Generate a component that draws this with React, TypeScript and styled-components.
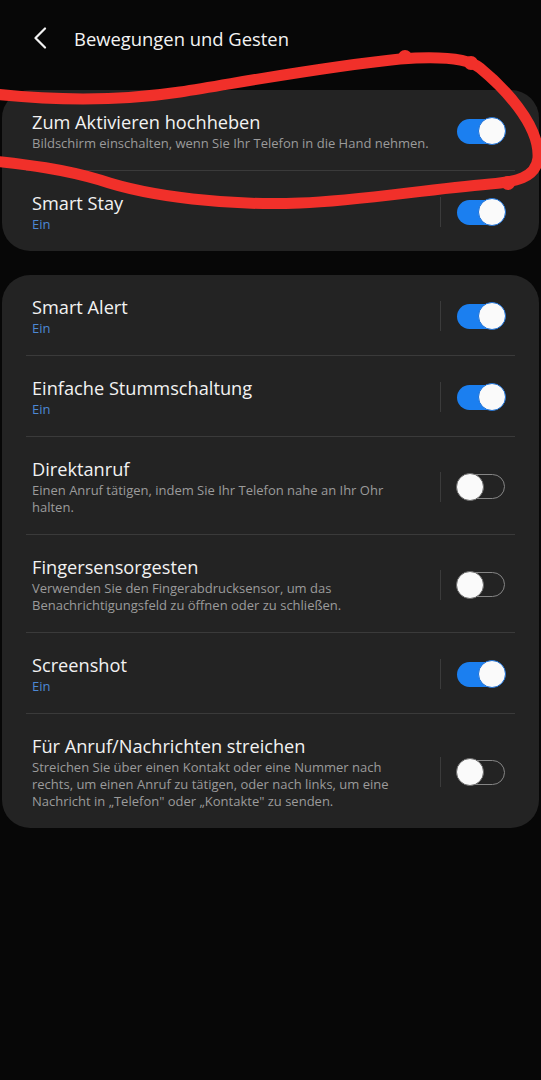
import styled, { createGlobalStyle } from 'styled-components';

type Item = {
  title: string;
  sub?: string;
  on: boolean;
  more?: boolean;
};

const TOP_ITEMS: Item[] = [
  {
    title: 'Zum Aktivieren hochheben',
    sub: 'Bildschirm einschalten, wenn Sie Ihr Telefon in die Hand nehmen.',
    on: true,
  },
  { title: 'Smart Stay', on: true, more: true },
];

const GESTURE_ITEMS: Item[] = [
  { title: 'Smart Alert', on: true, more: true },
  { title: 'Einfache Stummschaltung', on: true, more: true },
  {
    title: 'Direktanruf',
    sub: 'Einen Anruf tätigen, indem Sie Ihr Telefon nahe an Ihr Ohr halten.',
    on: false,
    more: true,
  },
  {
    title: 'Fingersensorgesten',
    sub: 'Verwenden Sie den Fingerabdrucksensor, um das Benachrichtigungsfeld zu öffnen oder zu schließen.',
    on: false,
    more: true,
  },
  { title: 'Screenshot', on: true, more: true },
  {
    title: 'Für Anruf/Nachrichten streichen',
    sub: 'Streichen Sie über einen Kontakt oder eine Nummer nach rechts, um einen Anruf zu tätigen, oder nach links, um eine Nachricht in „Telefon" oder „Kontakte" zu senden.',
    on: false,
    more: true,
  },
];

const App = () => {
  const renderList = (items: Item[]) =>
    items.map((item, idx) => (
      <div key={item.title}>
        {idx > 0 && <Divider />}
        <Row>
          <TextCol>
            <Title>{item.title}</Title>
            {item.sub ? <Sub>{item.sub}</Sub> : item.on && <Status>Ein</Status>}
          </TextCol>
          <Controls>
            {item.more && <VBar />}
            <Track on={item.on}>
              <Thumb on={item.on} />
            </Track>
          </Controls>
        </Row>
      </div>
    ));

  return (
    <>
      <GlobalStyle />
      <Screen>
        <Header>
          <BackButton aria-label="Zurück">
            <svg width="14" height="22" viewBox="0 0 14 22">
              <path d="M12 1.5 L2.5 11 L12 20.5" fill="none" stroke="#f2f2f2" strokeWidth="2.2" strokeLinecap="round" strokeLinejoin="round" />
            </svg>
          </BackButton>
          <HeaderTitle>Bewegungen und Gesten</HeaderTitle>
        </Header>
        <Cards>
          <Card>{renderList(TOP_ITEMS)}</Card>
          <Card>{renderList(GESTURE_ITEMS)}</Card>
        </Cards>
        {/* hand-drawn marker over the first option */}
        <Scribble width="541" height="230" viewBox="0 0 541 230">
          <g fill="none" stroke="#f1302a" strokeWidth="11" strokeLinecap="round" strokeLinejoin="round">
            <path d="M -6 94 C 60 101, 120 101, 180 92 C 260 79, 330 66, 400 59 C 440 56, 468 58, 480 68 C 502 86, 540 124, 538 158 C 536 178, 515 182, 490 184 C 420 190, 360 201, 300 203 C 230 206, 150 197, 100 180 C 60 168, 20 164, -6 161" />
          </g>
          <g fill="#f1302a">
            <circle cx="405" cy="57" r="7" />
            <circle cx="471" cy="63" r="7" />
            <circle cx="508" cy="183" r="7" />
          </g>
        </Scribble>
      </Screen>
    </>
  );
};

export default App;

const GlobalStyle = createGlobalStyle`
  html, body {
    margin: 0;
    padding: 0;
    background: #070707;
  }
  body {
    font-family: "Open Sans", "Noto Sans", "Liberation Sans", sans-serif;
    -webkit-font-smoothing: antialiased;
  }
`;

const Screen = styled.div`
  position: relative;
  width: 541px;
  min-height: 1080px;
  background: #070707;
  overflow: hidden;
`;

const Header = styled.header`
  display: flex;
  align-items: center;
  height: 76px;
  padding-left: 33px;
`;

const BackButton = styled.div`
  display: flex;
  align-items: center;
  width: 14px;
  height: 22px;
  margin-right: 27px;
`;

const HeaderTitle = styled.h1`
  margin: 0;
  font-size: 18.4px;
  font-weight: 400;
  color: #f4f4f4;
`;

const Cards = styled.div`
  display: flex;
  flex-direction: column;
  gap: 24px;
  padding: 14px 2px 0;
`;

const Card = styled.section`
  background: #232323;
  border-radius: 28px;
  overflow: hidden;
`;

const Row = styled.div`
  display: flex;
  align-items: center;
  padding: 20px 34px 18px 30px;
`;

const TextCol = styled.div`
  flex: 1;
  min-width: 0;
  padding-right: 14px;
`;

const Title = styled.div`
  font-size: 18.2px;
  line-height: 24px;
  color: #f2f2f2;
`;

const Sub = styled.div`
  margin-top: 1px;
  font-size: 13px;
  line-height: 17px;
  color: #9b9b9b;
`;

const Status = styled.div`
  margin-top: 1px;
  font-size: 13px;
  line-height: 17px;
  color: #4d88d4;
`;

const Controls = styled.div`
  display: flex;
  align-items: center;
  gap: 16px;
`;

const VBar = styled.div`
  width: 1px;
  height: 30px;
  margin-left: 16px;
  background: #3b3b3b;
`;

const Track = styled.div<{ on: boolean }>`
  position: relative;
  box-sizing: border-box;
  width: 48px;
  height: 25px;
  border-radius: 13px;
  background: ${(p) => (p.on ? '#1b7ff0' : 'transparent')};
  border: ${(p) => (p.on ? 'none' : '1.5px solid #858585')};
`;

const Thumb = styled.div<{ on: boolean }>`
  position: absolute;
  top: 50%;
  ${(p) => (p.on ? 'right: -1px;' : 'left: -2px;')}
  width: 28px;
  height: 28px;
  margin-top: -14px;
  box-sizing: border-box;
  border-radius: 50%;
  background: #fafafa;
  border: 1.5px solid ${(p) => (p.on ? '#1a6fd6' : '#6a6a6a')};
`;

const Divider = styled.div`
  height: 1px;
  margin: 0 24px;
  background: #3a3a3a;
`;

const Scribble = styled.svg`
  position: absolute;
  top: 0;
  left: 0;
  pointer-events: none;
`;
